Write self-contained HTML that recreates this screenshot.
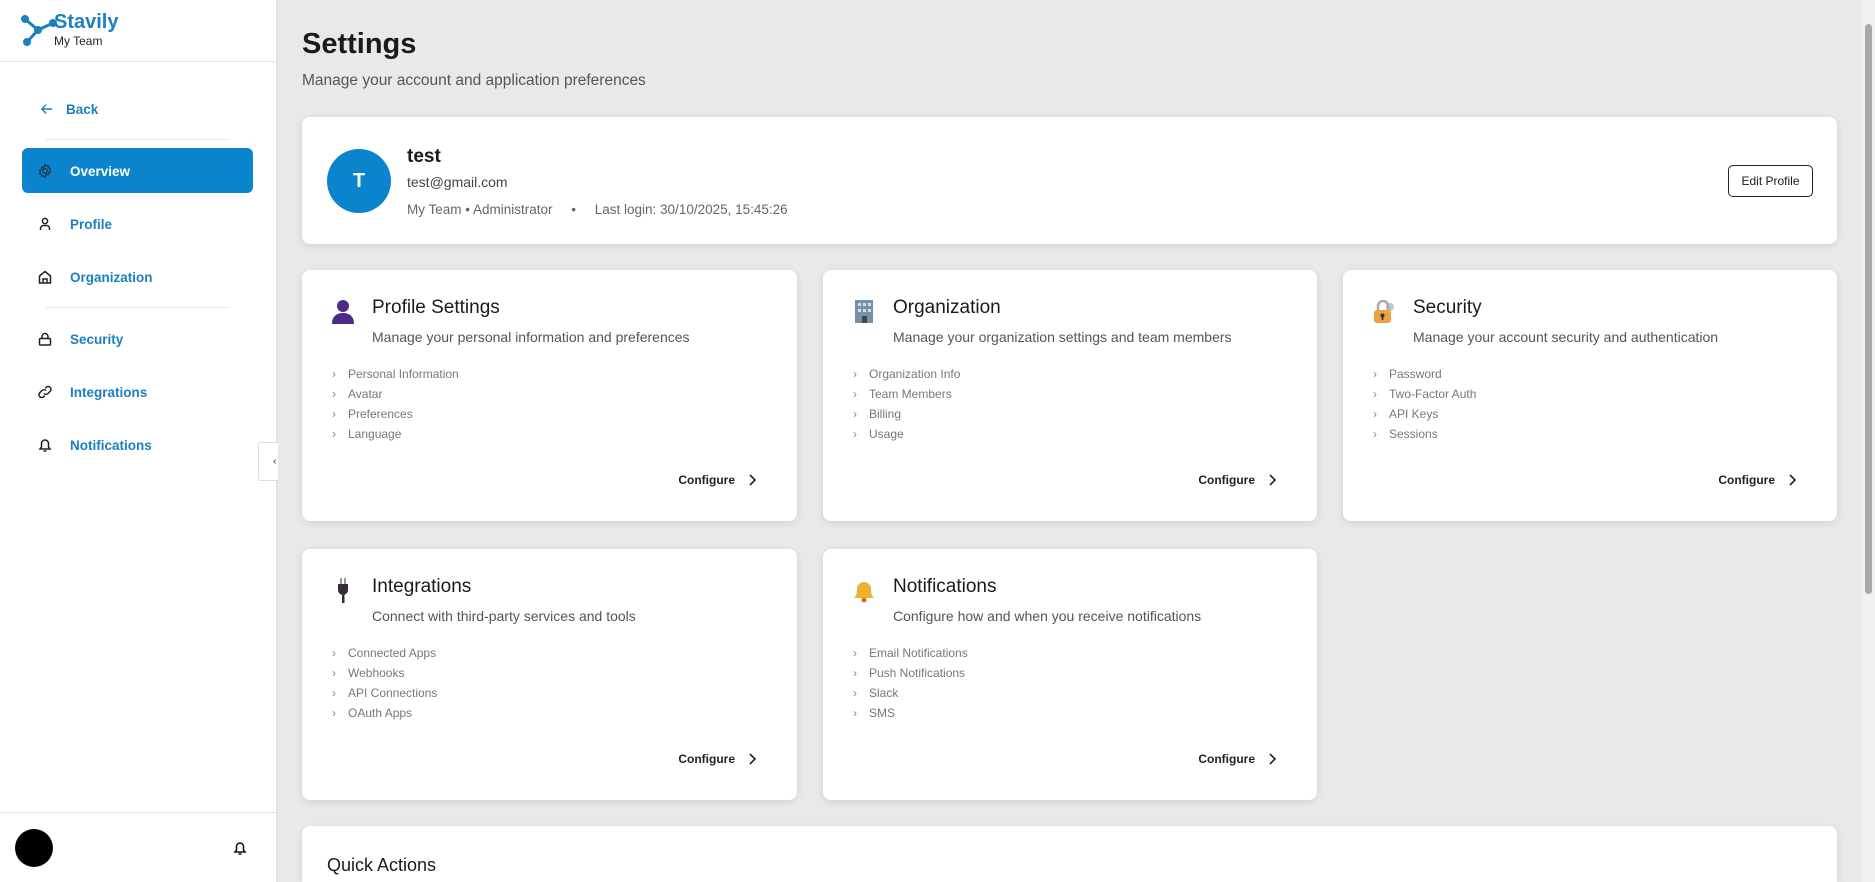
<!DOCTYPE html>
<html style="width:1875px;height:882px;overflow:hidden"><head><meta charset="utf-8"><style>
*{box-sizing:border-box;margin:0;padding:0}
body{width:1875px;height:882px;overflow:hidden;background:#e9e9e9;font-family:"Liberation Sans",sans-serif;position:relative;color:#1a1a1a}
.side{position:absolute;left:0;top:0;width:277px;height:882px;background:#fff;border-right:1px solid #ddd}
.abs{position:absolute}
.nav{position:absolute;left:37px;font-size:13.5px;font-weight:bold;color:#1b7fc0;display:flex;align-items:center}
.nav svg{width:16px;height:16px;margin-right:17px}
.card{position:absolute;background:#fff;border-radius:8px;box-shadow:0 2px 8px rgba(0,0,0,.1)}
.ct{position:absolute;left:70px;top:27px;font-size:19px;color:#1a1a1a}
.cd{position:absolute;left:70px;top:59px;font-size:14px;color:#555}
.li{position:absolute;left:30px;font-size:12px;color:#777}
.li span{display:inline-block;width:16px;color:#888}
.cf{position:absolute;right:40px;top:203px;font-size:12px;font-weight:bold;color:#222;display:flex;align-items:center}
.cf svg{margin-left:12px}
.ic{position:absolute;left:28px;top:28px;width:26px;height:26px}
</style></head><body>
<div class="side">
 <div class="abs" style="left:0;top:61px;width:277px;border-top:1px solid #e3e3e3"></div>
 <svg class="abs" style="left:20px;top:14px" width="38" height="34" viewBox="0 0 38 34"><g stroke="#1b7fc0" stroke-width="3"><line x1="5" y1="5" x2="18" y2="16"/><line x1="18" y1="16" x2="33" y2="9"/><line x1="18" y1="16" x2="7" y2="28"/></g><g fill="#1b7fc0"><circle cx="5" cy="5" r="4"/><circle cx="18" cy="16" r="4"/><circle cx="33" cy="9" r="4"/><circle cx="7" cy="28" r="4"/></g></svg>
 <div class="abs" style="left:54px;top:11px;font-size:20px;font-weight:bold;color:#1b7fc0">Stavily</div>
 <div class="abs" style="left:54px;top:34px;font-size:12px;color:#222">My Team</div>
 <div class="nav" style="top:101px;color:#1b7fc0;left:40px"><svg viewBox="0 0 16 16" fill="none" stroke="#1b7fc0" stroke-width="1.6" style="margin-right:12px;width:14px"><path d="M14 8H2M7 3L2 8l5 5"/></svg>Back</div>
 <div class="abs" style="left:46px;top:139px;width:183px;border-top:1px solid #e6e6e6"></div>
 <div class="abs" style="left:22px;top:148px;width:231px;height:45px;background:#0a84cc;border-radius:6px"></div>
 <div class="nav" style="top:163px;color:#fff"><svg viewBox="0 0 16 16" fill="none" stroke="#1a3a50" stroke-width="1.3"><circle cx="8" cy="8" r="2.3"/><path d="M8 1.5l1.2 1.6 2-.5.3 2 1.9.8-.9 1.8.9 1.8-1.9.8-.3 2-2-.5L8 14.5l-1.2-1.6-2 .5-.3-2-1.9-.8.9-1.8-.9-1.8 1.9-.8.3-2 2 .5z"/></svg>Overview</div>
 <div class="nav" style="top:216px"><svg viewBox="0 0 16 16" fill="none" stroke="#222" stroke-width="1.5"><circle cx="8" cy="5" r="2.6"/><path d="M3.5 14v-1.5a3 3 0 013-3h3a3 3 0 013 3V14"/></svg>Profile</div>
 <div class="nav" style="top:269px"><svg viewBox="0 0 16 16" fill="none" stroke="#222" stroke-width="1.5"><path d="M2.5 14V7L8 2.5 13.5 7v7zM6 14v-4h4v4"/></svg>Organization</div>
 <div class="abs" style="left:46px;top:307px;width:183px;border-top:1px solid #e6e6e6"></div>
 <div class="nav" style="top:331px"><svg viewBox="0 0 16 16" fill="none" stroke="#222" stroke-width="1.5"><rect x="2.5" y="7.5" width="11" height="6.5" rx="1"/><path d="M5 7.5V5.5a3 3 0 016 0v2"/></svg>Security</div>
 <div class="nav" style="top:384px"><svg viewBox="0 0 16 16" fill="none" stroke="#222" stroke-width="1.5"><path d="M7 9.5a3 3 0 004 0l2.2-2.2a2.8 2.8 0 00-4-4L8.2 4.3M9 6.5a3 3 0 00-4 0L2.8 8.7a2.8 2.8 0 004 4l1-1"/></svg>Integrations</div>
 <div class="nav" style="top:437px"><svg viewBox="0 0 16 16" fill="none" stroke="#222" stroke-width="1.5"><path d="M3 12h10l-1.5-2V6.5a3.5 3.5 0 00-7 0V10zM6.5 14h3"/></svg>Notifications</div>
 <div class="abs" style="left:258px;top:442px;width:20px;height:39px;background:#fff;border:1px solid #ddd;border-right:none;border-radius:3px 0 0 3px;font-size:10px;padding:13px 0 0 14px">‹</div>
 <div class="abs" style="left:0;top:812px;width:277px;border-top:1px solid #e3e3e3"></div>
 <div class="abs" style="left:15px;top:829px;width:38px;height:38px;border-radius:50%;background:#000"></div>
 <svg class="abs" style="left:232px;top:840px" width="16" height="16" viewBox="0 0 16 16" fill="none" stroke="#111" stroke-width="1.5"><path d="M3 12h10l-1.5-2V6.5a3.5 3.5 0 00-7 0V10zM6.5 14h3"/></svg>
</div>
<div class="abs" style="left:1862px;top:0;width:13px;height:882px;background:#f1f1f1"></div>
<div class="abs" style="left:1865px;top:24px;width:7px;height:570px;background:#a8a8a8;border-radius:4px"></div>

<div class="abs" style="left:302px;top:28px;font-size:29px;font-weight:bold;color:#1a1a1a">Settings</div>
<div class="abs" style="left:302px;top:72px;font-size:15.5px;color:#555">Manage your account and application preferences</div>

<div class="card" style="left:302px;top:117px;width:1535px;height:127px">
 <div class="abs" style="left:25px;top:32px;width:64px;height:64px;border-radius:50%;background:#0a84cc;color:#fff;font-weight:bold;font-size:20px;text-align:center;line-height:64px">T</div>
 <div class="abs" style="left:105px;top:29px;font-size:19px;font-weight:bold">test</div>
 <div class="abs" style="left:105px;top:57px;font-size:14px;color:#444">test@gmail.com</div>
 <div class="abs" style="left:105px;top:85px;font-size:13.5px;color:#666">My Team • Administrator &nbsp;&nbsp;&nbsp;&nbsp;• &nbsp;&nbsp;&nbsp;&nbsp;Last login: 30/10/2025, 15:45:26</div>
 <div class="abs" style="left:1426px;top:48px;width:85px;height:32px;border:1px solid #222;border-radius:5px;font-size:12px;text-align:center;line-height:30px">Edit Profile</div>
</div>

<div class="card" style="left:302px;top:270px;width:495px;height:251px">
 <svg class="ic" viewBox="0 0 26 26"><circle cx="13" cy="8" r="6" fill="#4b2a8a"/><path d="M2 26c0-8 5-11 11-11s11 3 11 11z" fill="#4b2a8a"/></svg>
 <div class="ct">Profile Settings</div><div class="cd">Manage your personal information and preferences</div>
 <div class="li" style="top:97px"><span>›</span>Personal Information</div><div class="li" style="top:117px"><span>›</span>Avatar</div><div class="li" style="top:137px"><span>›</span>Preferences</div><div class="li" style="top:157px"><span>›</span>Language</div>
 <div class="cf">Configure<svg width="10" height="12" viewBox="0 0 10 12" fill="none" stroke="#222" stroke-width="1.6"><path d="M3 1l5 5-5 5"/></svg></div>
</div>
<div class="card" style="left:823px;top:270px;width:494px;height:251px">
 <svg class="ic" viewBox="0 0 26 26"><rect x="4" y="2" width="18" height="23" fill="#7a8fa8"/><g fill="#cfe0f0"><rect x="7" y="5" width="3" height="3"/><rect x="12" y="5" width="3" height="3"/><rect x="17" y="5" width="3" height="3"/><rect x="7" y="11" width="3" height="3"/><rect x="12" y="11" width="3" height="3"/><rect x="17" y="11" width="3" height="3"/></g><rect x="11" y="18" width="5" height="7" fill="#445"/></svg>
 <div class="ct">Organization</div><div class="cd">Manage your organization settings and team members</div>
 <div class="li" style="top:97px"><span>›</span>Organization Info</div><div class="li" style="top:117px"><span>›</span>Team Members</div><div class="li" style="top:137px"><span>›</span>Billing</div><div class="li" style="top:157px"><span>›</span>Usage</div>
 <div class="cf">Configure<svg width="10" height="12" viewBox="0 0 10 12" fill="none" stroke="#222" stroke-width="1.6"><path d="M3 1l5 5-5 5"/></svg></div>
</div>
<div class="card" style="left:1343px;top:270px;width:494px;height:251px">
 <svg class="ic" viewBox="0 0 26 26"><circle cx="19" cy="9" r="4" fill="#c8c4d8"/><path d="M7 12V8a5 5 0 0110 0v4" fill="none" stroke="#aaa" stroke-width="2.5"/><rect x="3" y="12" width="17" height="13" rx="3" fill="#f0a040"/><circle cx="11.5" cy="17.5" r="2" fill="#333"/><rect x="10.7" y="18" width="1.6" height="4" fill="#333"/></svg>
 <div class="ct">Security</div><div class="cd">Manage your account security and authentication</div>
 <div class="li" style="top:97px"><span>›</span>Password</div><div class="li" style="top:117px"><span>›</span>Two-Factor Auth</div><div class="li" style="top:137px"><span>›</span>API Keys</div><div class="li" style="top:157px"><span>›</span>Sessions</div>
 <div class="cf">Configure<svg width="10" height="12" viewBox="0 0 10 12" fill="none" stroke="#222" stroke-width="1.6"><path d="M3 1l5 5-5 5"/></svg></div>
</div>
<div class="card" style="left:302px;top:549px;width:495px;height:251px">
 <svg class="ic" viewBox="0 0 26 26"><rect x="10" y="1" width="2" height="6" fill="#999"/><rect x="14" y="1" width="2" height="6" fill="#999"/><path d="M8 7h10v6a5 5 0 01-10 0z" fill="#3a2a3a"/><rect x="12" y="17" width="2.5" height="9" fill="#3a2a3a"/></svg>
 <div class="ct">Integrations</div><div class="cd">Connect with third-party services and tools</div>
 <div class="li" style="top:97px"><span>›</span>Connected Apps</div><div class="li" style="top:117px"><span>›</span>Webhooks</div><div class="li" style="top:137px"><span>›</span>API Connections</div><div class="li" style="top:157px"><span>›</span>OAuth Apps</div>
 <div class="cf">Configure<svg width="10" height="12" viewBox="0 0 10 12" fill="none" stroke="#222" stroke-width="1.6"><path d="M3 1l5 5-5 5"/></svg></div>
</div>
<div class="card" style="left:823px;top:549px;width:494px;height:251px">
 <svg class="ic" viewBox="0 0 26 26"><path d="M3 21c2-2 3-4 3-9a7 7 0 0114 0c0 5 1 7 3 9z" fill="#f0b030"/><circle cx="13" cy="23" r="2.5" fill="#c07a10"/></svg>
 <div class="ct">Notifications</div><div class="cd">Configure how and when you receive notifications</div>
 <div class="li" style="top:97px"><span>›</span>Email Notifications</div><div class="li" style="top:117px"><span>›</span>Push Notifications</div><div class="li" style="top:137px"><span>›</span>Slack</div><div class="li" style="top:157px"><span>›</span>SMS</div>
 <div class="cf">Configure<svg width="10" height="12" viewBox="0 0 10 12" fill="none" stroke="#222" stroke-width="1.6"><path d="M3 1l5 5-5 5"/></svg></div>
</div>
<div class="card" style="left:302px;top:826px;width:1535px;height:56px;border-radius:8px 8px 0 0">
 <div class="abs" style="left:25px;top:29px;font-size:18px">Quick Actions</div>
</div>
</body></html>
